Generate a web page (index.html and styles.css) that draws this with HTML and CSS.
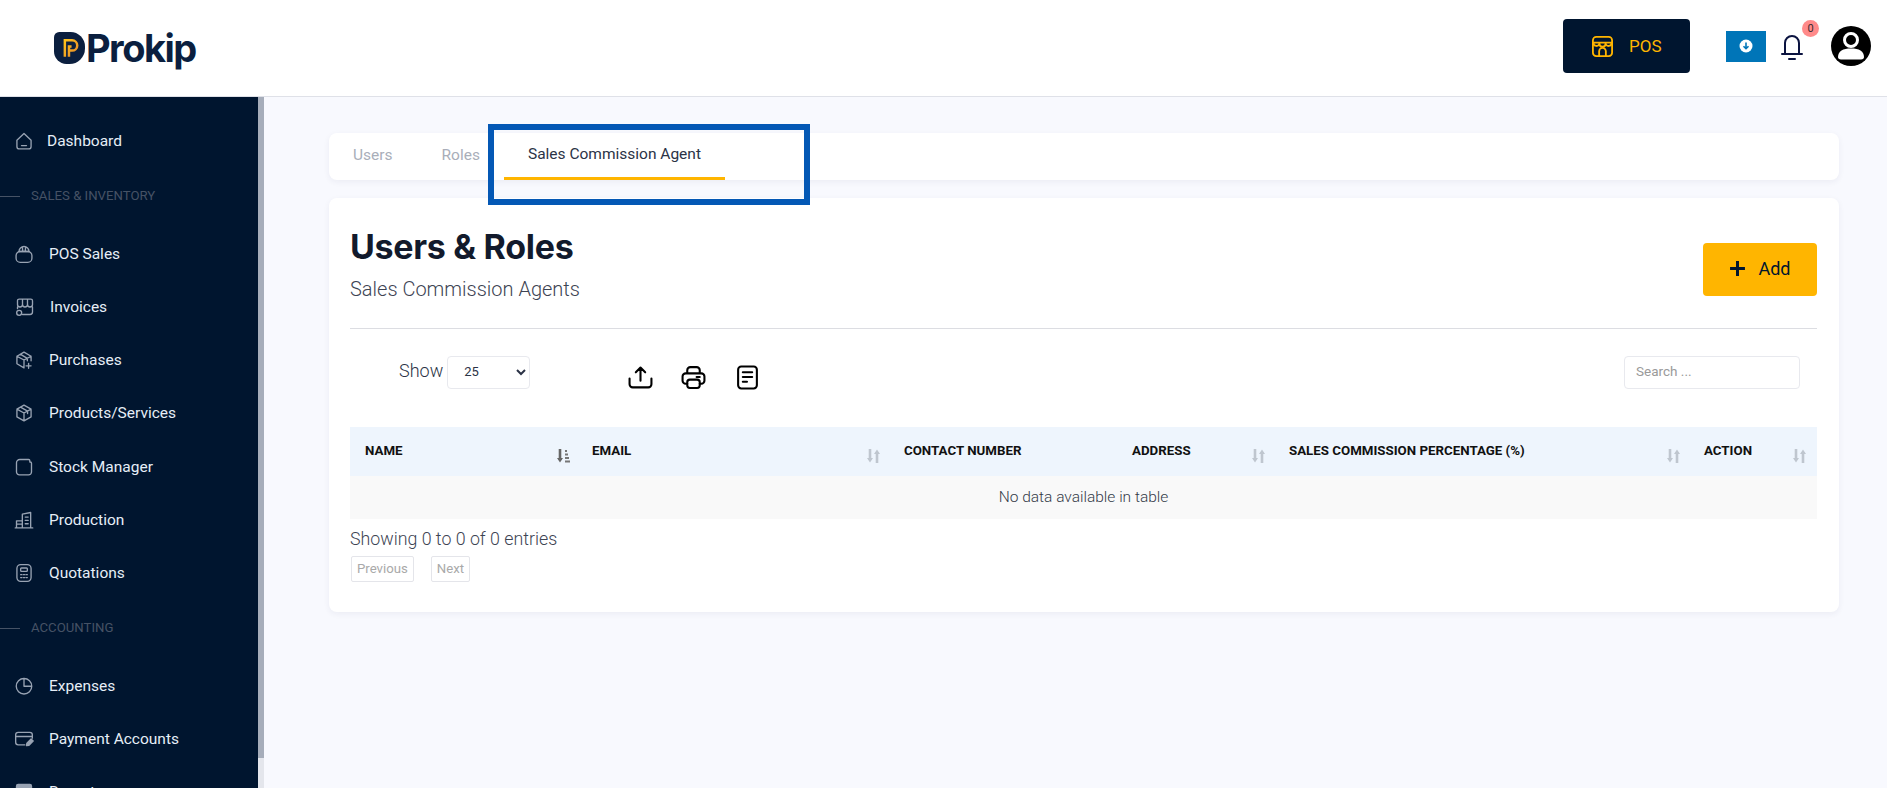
FILE: index.html
```html
<!DOCTYPE html>
<html lang="en">
<head>
    <meta charset="UTF-8">
    <meta name="viewport" content="width=device-width, initial-scale=1.0">
    <title>Prokip - Users &amp; Roles</title>
    <link rel="stylesheet" href="styles.css">
</head>
<body>
    <header class="topbar">
        <a class="logo" href="#">
            <svg class="logo-mark" viewBox="0 0 30 31">
                <defs>
                    <linearGradient id="logoGold" x1="0" y1="0" x2="1" y2="1">
                        <stop offset="0" stop-color="#ffc21a"/>
                        <stop offset="1" stop-color="#e8892b"/>
                    </linearGradient>
                </defs>
                <path d="M5 0h11a14 14 0 0 1 14 14v2a15 15 0 0 1-15 15h-3A12 12 0 0 1 0 19V5a5 5 0 0 1 5-5Z" fill="#0b1f3f"/>
                <path d="M10.500 24V8h7a5 5 0 0 1 0 10h-3M14.500 24v-10h2.500" fill="none" stroke="url(#logoGold)" stroke-width="2.400"/>
            </svg>
            <span class="logo-text">Prokip</span>
        </a>
        <div class="topbar-actions">
            <a class="pos-btn" href="#">
                <svg viewBox="0 0 24 24" fill="none" stroke="#ffb500" stroke-width="1.900" stroke-linejoin="round" stroke-linecap="round">
                    <rect x="2" y="2" width="20" height="20" rx="3.500"/>
                    <path d="M2 8h20M2.500 8.500a3.200 3.200 0 0 0 6.300.5 3.200 3.200 0 0 0 6.400 0 3.200 3.200 0 0 0 6.300-.5"/>
                    <path d="M8.500 22v-5a3.500 3.500 0 0 1 7 0v5"/>
                </svg>
                <span>POS</span>
            </a>
            <button class="install-btn">
                <svg viewBox="0 0 14 14">
                    <circle cx="7" cy="7" r="6.500" fill="#fff"/>
                    <path d="M7 3.500v6M4.500 7.200 7 9.700l2.500-2.500" fill="none" stroke="#0075b8" stroke-width="1.600"/>
                </svg>
            </button>
            <div class="bell">
                <svg viewBox="0 0 22 25" fill="none" stroke="#0b1340" stroke-width="2" stroke-linecap="round" stroke-linejoin="round">
                    <path d="M4 18.500V8a7 7 0 0 1 14 0v10.500M1 19h20M8 24h6"/>
                </svg>
                <span class="badge">0</span>
            </div>
            <svg class="avatar" viewBox="0 0 40 40">
                <circle cx="20" cy="20" r="20" fill="#000"/>
                <circle cx="20" cy="14" r="6.500" fill="none" stroke="#fff" stroke-width="3"/>
                <path d="M7 31c0-6 5-8.500 13-8.500S33 25 33 31c0 1.500-1 2.500-3 2.500H10c-2 0-3-1-3-2.500Z" fill="#fff"/>
            </svg>
        </div>
    </header>

    <div class="layout">
        <aside class="sidebar">
            <nav class="side-nav">
                <a class="nav-item nav-tight" href="#">
                    <svg class="nav-icon" viewBox="0 0 24 24"><path d="M3.500 11 12 3l8.500 8v7.500a3 3 0 0 1-3 3h-11a3 3 0 0 1-3-3ZM9 17.500h6"/></svg>
                    <span>Dashboard</span>
                </a>
                <div class="nav-section"><span class="nav-rule"></span><span>SALES &amp; INVENTORY</span></div>
                <a class="nav-item" href="#">
                    <svg class="nav-icon" viewBox="0 0 24 24"><rect x="2.500" y="9" width="19" height="13" rx="5"/><path d="M6 9a6 6 0 0 1 12 0ZM10 3.500l.5 5M14 3.500l-.5 5"/></svg>
                    <span>POS Sales</span>
                </a>
                <a class="nav-item nav-wide" href="#">
                    <svg class="nav-icon" viewBox="0 0 24 24"><path d="M5 2.500h14a2 2 0 0 1 2 2V9a3 3 0 0 1-6 0 3 3 0 0 1-6 0 3 3 0 0 1-6 0V4.500a2 2 0 0 1 2-2ZM9 2.500V9M15 2.500V9M21 12v6a3 3 0 0 1-3 3H9M3 12v2"/><circle cx="5" cy="19" r="3"/></svg>
                    <span>Invoices</span>
                </a>
                <a class="nav-item" href="#">
                    <svg class="nav-icon" viewBox="0 0 24 24"><path d="M20.500 13V7.500L12 2.500l-8.500 5v9l8.500 5M3.500 7.500 12 12l8.500-4.500M12 12v9.500M7.500 5l8.500 5v3M17.500 16v6M14.500 19h6"/></svg>
                    <span>Purchases</span>
                </a>
                <a class="nav-item" href="#">
                    <svg class="nav-icon" viewBox="0 0 24 24"><path d="M12 2.500l8.500 4.800v9.400L12 21.500l-8.500-4.800V7.300ZM3.500 7.300 12 12l8.500-4.700M12 12v9.500M7.800 4.900l8.500 4.800v3"/></svg>
                    <span>Products/Services</span>
                </a>
                <a class="nav-item" href="#">
                    <svg class="nav-icon" viewBox="0 0 24 24"><path d="M3 7a4 4 0 0 1 4-4h10.500a1.500 1.500 0 0 1 1.500 1.500V6h.5A1.500 1.500 0 0 1 21 7.500V18a3.500 3.500 0 0 1-3.500 3.500h-11A3.500 3.500 0 0 1 3 18Z"/></svg>
                    <span>Stock Manager</span>
                </a>
                <a class="nav-item" href="#">
                    <svg class="nav-icon" viewBox="0 0 24 24"><path d="M3 21.500V13h7M10 21.500V5l10-2v18.500ZM1.500 21.500h21M13.500 8.500h3.500M13.500 12.500h3.500M13.500 16.500h3.500M3 17h7"/></svg>
                    <span>Production</span>
                </a>
                <a class="nav-item" href="#">
                    <svg class="nav-icon" viewBox="0 0 24 24"><rect x="3.500" y="2" width="17" height="20" rx="4.500"/><rect x="8" y="6" width="8" height="4" rx="1"/><path d="M8 14h1.500M11.300 14h1.500M14.500 14H16M8 17.500h1.500M11.300 17.500h1.500M14.500 17.500H16"/></svg>
                    <span>Quotations</span>
                </a>
                <div class="nav-section"><span class="nav-rule"></span><span>ACCOUNTING</span></div>
                <a class="nav-item" href="#">
                    <svg class="nav-icon" viewBox="0 0 24 24"><path d="M12 3a9.300 9.300 0 1 0 9.300 9.300H12ZM12 3a9.300 9.300 0 0 1 9.300 9.300"/></svg>
                    <span>Expenses</span>
                </a>
                <a class="nav-item" href="#">
                    <svg class="nav-icon" viewBox="0 0 24 24"><path d="M13 19H5a3 3 0 0 1-3-3V7a3 3 0 0 1 3-3h14a3 3 0 0 1 3 3v4M2 9h20"/><path d="M15 20l.5-3 5-5 2.500 2.500-5 5Z" fill="#98a3b3"/></svg>
                    <span>Payment Accounts</span>
                </a>
                <a class="nav-item" href="#">
                    <svg class="nav-icon" viewBox="0 0 24 24"><rect x="3" y="3" width="18" height="18" rx="2" fill="#98a3b3"/></svg>
                    <span>Reports</span>
                </a>
            </nav>
            <div class="side-scroll"><div class="side-thumb"></div></div>
        </aside>

        <main class="main">
            <div class="tabs">
                <a class="tab" href="#">Users</a>
                <a class="tab" href="#">Roles</a>
                <a class="tab active" href="#">Sales Commission Agent</a>
                <div class="highlight"></div>
            </div>

            <section class="card">
                <div class="card-head">
                    <div>
                        <h1>Users &amp; Roles</h1>
                        <p class="subtitle">Sales Commission Agents</p>
                    </div>
                    <button class="add-btn">
                        <svg viewBox="0 0 16 16"><path d="M8 1v14M1 8h14" stroke="#00152f" stroke-width="2.800" fill="none"/></svg>
                        <span>Add</span>
                    </button>
                </div>

                <div class="toolbar">
                    <label class="show-label">Show</label>
                    <select class="show-select">
                        <option>25</option>
                        <option>50</option>
                        <option>100</option>
                    </select>
                    <div class="export-icons">
                        <svg viewBox="0 0 24 24" fill="none" stroke="#000" stroke-width="2" stroke-linecap="round" stroke-linejoin="round">
                            <path d="M12 15V2.500M7.500 7 12 2.500 16.500 7M1.500 13v5.500a3 3 0 0 0 3 3h15a3 3 0 0 0 3-3V13"/>
                        </svg>
                        <svg viewBox="0 0 24 24" fill="none" stroke="#000" stroke-width="2" stroke-linecap="round" stroke-linejoin="round">
                            <path d="M6 8V5a3 3 0 0 1 3-3h6a3 3 0 0 1 3 3v3M6 18H4.500A3 3 0 0 1 1.500 15v-4a3 3 0 0 1 3-3h15a3 3 0 0 1 3 3v4a3 3 0 0 1-3 3H18M15 11.500h3"/>
                            <rect x="6" y="14" width="12" height="8" rx="2.500"/>
                        </svg>
                        <svg viewBox="0 0 24 24" fill="none" stroke="#000" stroke-width="2" stroke-linecap="round" stroke-linejoin="round">
                            <rect x="3" y="1.500" width="18" height="21" rx="3"/>
                            <path d="M7.500 7h9M7.500 11.500h9M7.500 16h4"/>
                        </svg>
                    </div>
                    <input class="search" type="text" placeholder="Search ...">
                </div>

                <table class="data-table">
                    <colgroup>
                        <col class="col-name">
                        <col class="col-email">
                        <col class="col-contact">
                        <col class="col-address">
                        <col class="col-percent">
                        <col class="col-action">
                    </colgroup>
                    <thead>
                        <tr>
                            <th class="th-first"><div class="th-in">NAME
                                <svg class="sort" viewBox="0 0 13 14"><path d="M3 0v11" stroke="#666" stroke-width="2.600"/><path d="M0 9h6l-3 4.500Z" fill="#666"/><path d="M8 2h2M8 5.500h3M8 9h4M8 12.500h5" stroke="#777" stroke-width="2"/></svg>
                            </div></th>
                            <th><div class="th-in">EMAIL
                                <svg class="sort" viewBox="0 0 13 14"><path d="M3 0v11M10 3v11" stroke="#bfc6cf" stroke-width="2.600"/><path d="M0 9h6l-3 4.500ZM7 5h6l-3-4.500Z" fill="#bfc6cf"/></svg>
                            </div></th>
                            <th><div class="th-in">CONTACT NUMBER</div></th>
                            <th><div class="th-in">ADDRESS
                                <svg class="sort" viewBox="0 0 13 14"><path d="M3 0v11M10 3v11" stroke="#bfc6cf" stroke-width="2.600"/><path d="M0 9h6l-3 4.500ZM7 5h6l-3-4.500Z" fill="#bfc6cf"/></svg>
                            </div></th>
                            <th><div class="th-in">SALES COMMISSION PERCENTAGE (%)
                                <svg class="sort" viewBox="0 0 13 14"><path d="M3 0v11M10 3v11" stroke="#bfc6cf" stroke-width="2.600"/><path d="M0 9h6l-3 4.500ZM7 5h6l-3-4.500Z" fill="#bfc6cf"/></svg>
                            </div></th>
                            <th class="th-last"><div class="th-in">ACTION
                                <svg class="sort" viewBox="0 0 13 14"><path d="M3 0v11M10 3v11" stroke="#bfc6cf" stroke-width="2.600"/><path d="M0 9h6l-3 4.500ZM7 5h6l-3-4.500Z" fill="#bfc6cf"/></svg>
                            </div></th>
                        </tr>
                    </thead>
                    <tbody>
                        <tr>
                            <td colspan="6">No data available in table</td>
                        </tr>
                    </tbody>
                </table>

                <div class="table-info">Showing 0 to 0 of 0 entries</div>
                <div class="pager">
                    <a class="page-btn" href="#">Previous</a>
                    <a class="page-btn" href="#">Next</a>
                </div>
            </section>
        </main>
    </div>
</body>
</html>
```

FILE: styles.css
```css
* {
    box-sizing: border-box;
}
body {
    margin: 0;
    padding: 0;
    height: 788px;
    overflow: hidden;
    font-family: Roboto, "Liberation Sans", sans-serif;
    background-color: #f8f9fe;
}
a {
    text-decoration: none;
}

/* top bar */
.topbar {
    display: flex;
    align-items: center;
    justify-content: space-between;
    height: 97px;
    padding: 0 16px 0 54px;
    background-color: #fff;
    border-bottom: 1px solid #dfe1e8;
}
.logo {
    display: flex;
    align-items: center;
    gap: 1px;
    margin-top: -1px;
}
.logo-mark {
    width: 31px;
    height: 32px;
}
.logo-text {
    font-family: Inter, sans-serif;
    font-size: 38px;
    font-weight: 700;
    letter-spacing: -1.5px;
    color: #0b1f3f;
}
.topbar-actions {
    display: flex;
    align-items: center;
    margin-top: -4px;
}
.pos-btn {
    display: flex;
    align-items: center;
    gap: 15px;
    width: 127px;
    height: 54px;
    padding-left: 28px;
    border-radius: 4px;
    background-color: #00152f;
    color: #ffb500;
    font-size: 17px;
}
.pos-btn svg {
    width: 23px;
    height: 23px;
}
.install-btn {
    display: flex;
    align-items: center;
    justify-content: center;
    width: 40px;
    height: 31px;
    margin-left: 36px;
    padding: 0;
    border: none;
    background-color: #0075b8;
}
.install-btn svg {
    width: 14px;
    height: 14px;
}
.bell {
    position: relative;
    width: 22px;
    height: 25px;
    margin-left: 15px;
    margin-top: 2px;
}
.bell svg {
    display: block;
    width: 22px;
    height: 25px;
}
.badge {
    position: absolute;
    top: -15px;
    left: 21px;
    width: 17px;
    height: 17px;
    border-radius: 50%;
    background-color: #ff8a8a;
    color: #3a2a30;
    font-size: 11px;
    line-height: 17px;
    text-align: center;
}
.avatar {
    width: 40px;
    height: 40px;
    margin-left: 28px;
}

/* sidebar */
.layout {
    display: flex;
    height: 691px;
}
.sidebar {
    display: flex;
    flex: none;
    width: 264px;
    overflow: hidden;
    background-color: #00152f;
}
.side-nav {
    width: 258px;
    padding-top: 17px;
}
.side-scroll {
    width: 6px;
    background-color: #e4e6ec;
}
.side-thumb {
    height: 661px;
    background-color: #a6adba;
}
.nav-item {
    display: flex;
    align-items: center;
    gap: 15px;
    height: 53.2px;
    padding-left: 14px;
    color: #e6eef7;
    font-size: 15.5px;
}
.nav-tight {
    gap: 13px;
}
.nav-wide {
    padding-left: 15px;
}
.nav-icon {
    flex: none;
    width: 20px;
    height: 20px;
    fill: none;
    stroke: #98a3b3;
    stroke-width: 1.6;
    stroke-linecap: round;
    stroke-linejoin: round;
}
.nav-section {
    display: flex;
    align-items: center;
    gap: 11px;
    height: 60px;
    padding-bottom: 4px;
    color: #465265;
    font-size: 13.2px;
}
.nav-rule {
    width: 20px;
    height: 1px;
    margin-top: 2px;
    background-color: #465265;
}

/* main area */
.main {
    flex: 1;
    padding: 36px 48px 0 65px;
}
.tabs {
    position: relative;
    display: flex;
    height: 47px;
    border-radius: 8px;
    background-color: #fff;
    box-shadow: 0 2px 6px rgba(30, 40, 80, 0.06);
}
.tab {
    height: 47px;
    padding: 13px 24px 0;
    color: #a9aeb9;
    font-size: 15.5px;
    font-weight: 400;
}
.tab:first-child {
    padding-right: 25px;
}
.tab.active {
    padding-top: 12px;
    border-bottom: 3px solid #ffb500;
    color: #2b3346;
}
/* blue box drawn over the screenshot */
.highlight {
    position: absolute;
    top: -9px;
    left: 159px;
    width: 322px;
    height: 81px;
    border: 6px solid #0458b5;
}
.card {
    height: 414px;
    margin-top: 18px;
    padding: 0 22px 0 21px;
    border-radius: 8px;
    background-color: #fff;
    box-shadow: 0 2px 6px rgba(30, 40, 80, 0.06);
}
.card-head {
    display: flex;
    align-items: flex-start;
    justify-content: space-between;
    height: 131px;
    padding-top: 29px;
    border-bottom: 1px solid #dcdde2;
}
h1 {
    margin: 0;
    color: #121a2c;
    font-family: Inter, sans-serif;
    font-size: 34px;
    font-weight: 700;
    letter-spacing: -0.3px;
    line-height: 40px;
}
.subtitle {
    margin: 10px 0 0;
    color: #3d4453;
    font-size: 20px;
    font-weight: 300;
    line-height: 24px;
}
.add-btn {
    display: flex;
    align-items: center;
    justify-content: center;
    gap: 12px;
    width: 114px;
    height: 53px;
    margin-top: 16px;
    padding-bottom: 3px;
    border: none;
    border-radius: 4px;
    background-color: #ffb500;
    color: #00152f;
    font-family: Roboto, sans-serif;
    font-size: 18px;
}
.add-btn svg {
    width: 17px;
    height: 17px;
}
.toolbar {
    display: flex;
    align-items: center;
    height: 33px;
    margin-top: 27px;
    padding-left: 49px;
    padding-right: 17px;
}
.show-label {
    color: #2b3346;
    font-size: 18px;
    font-weight: 300;
    margin-top: -4px;
}
.show-select {
    width: 83px;
    height: 33px;
    margin-left: 4px;
    padding-left: 12px;
    padding-bottom: 2px;
    border: 1px solid #e8e9ee;
    border-radius: 4px;
    background-color: #fff;
    color: #2b3346;
    font-family: Roboto, sans-serif;
    font-size: 13px;
}
.export-icons {
    display: flex;
    gap: 28px;
    margin-left: 98px;
    margin-top: 9px;
}
.export-icons svg {
    width: 25px;
    height: 25px;
}
.export-icons svg:last-child {
    margin-left: 1px;
}
.search {
    width: 176px;
    height: 33px;
    margin-left: auto;
    padding: 0 11px 4px;
    border: 1px solid #e8e9ee;
    border-radius: 4px;
    font-family: Roboto, sans-serif;
    font-size: 13.5px;
}
.search::placeholder {
    color: #9a9a9a;
}

/* table */
.data-table {
    width: 100%;
    margin-top: 38px;
    border-collapse: collapse;
    table-layout: fixed;
}
.col-name {
    width: 228px;
}
.col-email {
    width: 312px;
}
.col-contact {
    width: 228px;
}
.col-address {
    width: 157px;
}
.col-percent {
    width: 415px;
}
.data-table th {
    height: 49px;
    padding: 0 0 0 14px;
    background-color: #eef5fd;
    color: #111;
    font-size: 13.3px;
    font-weight: 700;
    text-align: left;
}
.data-table .th-first {
    padding-left: 15px;
}
.th-in {
    display: flex;
    justify-content: space-between;
    padding: 0 10px 2px 0;
}
.th-first .th-in {
    padding-right: 8px;
}
.th-last .th-in {
    padding-right: 11px;
}
.sort {
    flex: none;
    width: 13px;
    height: 14px;
    margin-top: 6px;
    margin-bottom: -6px;
}
.data-table td {
    height: 43px;
    padding-bottom: 2px;
    background-color: #f9f9f9;
    color: #333a48;
    font-size: 15.5px;
    font-weight: 300;
    text-align: center;
}
.table-info {
    margin-top: 9px;
    color: #3d4453;
    font-size: 17.8px;
    font-weight: 300;
    line-height: 22px;
}
.pager {
    display: flex;
    gap: 17px;
    margin-top: 6px;
    margin-left: 1px;
}
.page-btn {
    height: 26px;
    padding: 0 5px;
    border: 1px solid #e4e5ea;
    border-radius: 2px;
    color: #a9a9a9;
    font-size: 13.2px;
    line-height: 24px;
}
```
